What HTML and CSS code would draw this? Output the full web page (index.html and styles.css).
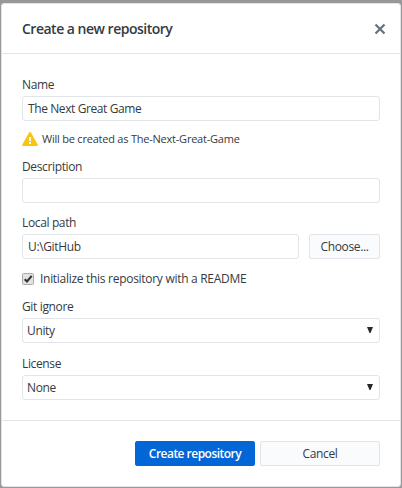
FILE: index.html
```html
<!DOCTYPE html>
<html lang="en">
<head>
<meta charset="utf-8">
<title>Create a new repository</title>
<link rel="stylesheet" href="styles.css">
</head>
<body>
<div class="dialog">
  <header class="header">
    <h1 class="title">Create a new repository</h1>
    <svg class="close" width="12" height="12" viewBox="0 0 12 12"><path d="M1.5 1.5 10.5 10.5M10.5 1.5 1.5 10.5"/></svg>
  </header>
  <main class="content">
    <div class="label"><span class="text">Name</span></div>
    <div class="field"><span class="text game">The Next Great Game</span></div>
    <div class="warning">
      <svg width="16" height="14" viewBox="0 0 16 14"><path fill="#f9c513" d="M7.1.6Q8-.7 8.9.6L15.8 12.7Q16.2 14 15 14H1Q-.2 14 .2 12.7Z"/><path fill="#fff" d="M7 5h2v4H7zM7 10h2v2H7z"/></svg>
      <span class="created">Will be created as The-Next-Great-Game</span>
    </div>
    <div class="label"><span class="text">Description</span></div>
    <div class="field"></div>
    <div class="label path-label"><span class="text">Local path</span></div>
    <div class="path-row">
      <div class="field"><span class="text">U:\GitHub</span></div>
      <div class="button"><span class="text">Choose...</span></div>
    </div>
    <div class="check-row">
      <svg width="12" height="12" viewBox="0 0 12 12"><rect x=".5" y=".5" width="11" height="11" rx="1" fill="#e3e3e3" stroke="#aaa"/><path d="M2.7 6.2 5 8.5 9.7 2.8" fill="none" stroke="#333" stroke-width="2.1"/></svg>
      <span class="init">Initialize this repository with a README</span>
    </div>
    <div class="label"><span class="text">Git ignore</span></div>
    <div class="field select"><span class="text">Unity</span><svg width="6" height="6" viewBox="0 0 6 6"><path d="M0 0h6L3.5 6h-1z"/></svg></div>
    <div class="label license-label"><span class="text">License</span></div>
    <div class="field select"><span class="text">None</span><svg width="6" height="6" viewBox="0 0 6 6"><path d="M0 0h6L3.5 6h-1z"/></svg></div>
  </main>
  <footer class="footer">
    <div class="button primary"><span class="create">Create repository</span></div>
    <div class="button"><span class="text">Cancel</span></div>
  </footer>
</div>
</body>
</html>
```
FILE: styles.css
```css
* { box-sizing: border-box; }
body {
  margin: 0;
  height: 488px;
  padding: 3px 1px 1px;
  background: #98989a;
  font: 12px/16px "Open Sans", "Noto Sans", sans-serif;
  color: #353a40;
  overflow: hidden;
}
svg { display: block; flex: none; }
span { white-space: nowrap; }
.dialog {
  height: 484px;
  border: 1px solid #e1e4e8;
  border-radius: 3px;
  background: #fff;
}
.header {
  height: 50px;
  padding: 0 20px;
  display: flex;
  align-items: center;
  justify-content: space-between;
  border-bottom: 1px solid #e1e4e8;
}
.title { margin: 0; font-size: 14px; line-height: 20px; font-weight: 600; letter-spacing: -.5px; white-space: nowrap; }
.close { fill: none; stroke: #6a737d; stroke-width: 2.3; margin-right: -6px; }
.content { height: 366px; padding: 22px 20px 0; }
.label { height: 20px; padding-bottom: 2px; display: flex; align-items: center; }
.field {
  height: 25px;
  padding: 0 5px;
  display: flex;
  align-items: center;
  border: 1px solid #e1e4e8;
  border-radius: 3px;
}
.warning { height: 37px; padding-bottom: 1px; display: flex; align-items: center; gap: 4px; }
.path-label { margin-top: 11px; }
.license-label { margin-top: 12px; }
.path-row { display: grid; grid-template-columns: 277px 71px; gap: 10px; }
.check-row { height: 39px; display: flex; align-items: center; gap: 6px; }
.select { padding: 0 6px 0 4px; justify-content: space-between; }
.select svg { fill: #24292e; margin-top: -2px; }
.button {
  height: 25px;
  display: flex;
  align-items: center;
  justify-content: center;
  border: 1px solid #e1e4e8;
  border-radius: 2px;
  background: #fafbfc;
}
.footer {
  height: 66px;
  padding: 20px 20px 0;
  border-top: 1px solid #e1e4e8;
  display: grid;
  grid-template-columns: 120px 120px;
  gap: 5px;
  justify-content: end;
}
.primary { background: #0366d6; border-color: #0366d6; color: #fff; font-weight: 600; }
.text { letter-spacing: -.36px; }
.game { letter-spacing: -.4px; }
.created { font-size: 11px; letter-spacing: -.22px; }
.init { letter-spacing: -.29px; }
.create { letter-spacing: -.52px; }
```
